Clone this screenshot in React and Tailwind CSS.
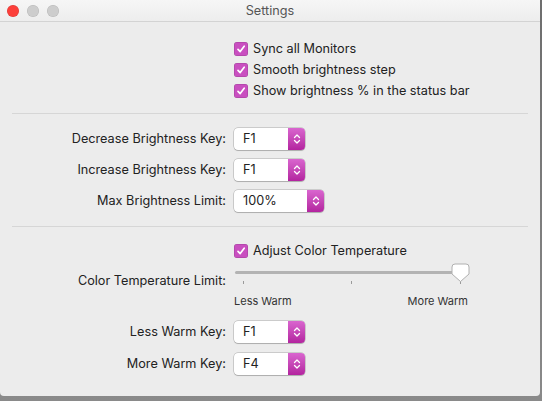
import React from 'react';

const font = { fontFamily: 'Inter, "Noto Sans", sans-serif' };

function Check({ label }) {
  return (
    <div className="flex h-[21px] items-center">
      <span className="flex h-[14px] w-[14px] items-center justify-center rounded-[3px] bg-[#c94fc0] shadow-[inset_0_0_0_0.5px_rgba(0,0,0,0.2)]">
        <svg width="10" height="10" viewBox="0 0 10 10" fill="none">
          <path d="M2 5.3 L4.2 7.6 L8.2 2.2" stroke="white" strokeWidth="1.7" strokeLinecap="round" strokeLinejoin="round" />
        </svg>
      </span>
      <span className="ml-[5px] text-[12.7px] text-[#222]">{label}</span>
    </div>
  );
}

function Popup({ value, width = 'w-[71px]' }) {
  return (
    <div className={`flex h-[22px] ${width} rounded-[4px] bg-white shadow-[0_0_0_0.5px_rgba(0,0,0,0.28),0_1px_1px_rgba(0,0,0,0.15)]`}>
      <span className="flex-1 pl-[9px] text-[12.7px] leading-[22px] text-[#222]">{value}</span>
      <span className="flex w-[17px] items-center justify-center rounded-r-[4px] bg-gradient-to-b from-[#d965cf] to-[#b3239f]">
        <svg width="8" height="12" viewBox="0 0 8 12" fill="none">
          <path d="M1.5 4.5 L4 2 L6.5 4.5 M1.5 7.5 L4 10 L6.5 7.5" stroke="white" strokeWidth="1.3" strokeLinecap="round" strokeLinejoin="round" />
        </svg>
      </span>
    </div>
  );
}

function Row({ label, children, className = '' }) {
  return (
    <div className={`flex items-center ${className}`}>
      <div className="w-[226px] text-right text-[12.7px] text-[#222]">{label}</div>
      <div className="ml-[8px]">{children}</div>
    </div>
  );
}

export default function App() {
  return (
    <div className="h-[401px] w-[542px] bg-gradient-to-b from-[#6e6e6e] to-[#8a8a8a]" style={font}>
      <div className="flex h-[396px] w-[540px] flex-col overflow-hidden rounded-b-[4px] bg-[#ececec]">
        {/* title bar */}
        <div className="relative flex h-[22px] items-center justify-center border-b border-[#d3d3d3] bg-gradient-to-b from-[#f6f6f6] to-[#ededed]">
          <div className="absolute left-[7px] top-[5px] flex gap-[8px]">
            <span className="h-[12px] w-[12px] rounded-full bg-[#fc3f3a] shadow-[inset_0_0_0_0.5px_rgba(0,0,0,0.15)]" />
            <span className="h-[12px] w-[12px] rounded-full bg-[#cdcdcd] shadow-[inset_0_0_0_0.5px_rgba(0,0,0,0.12)]" />
            <span className="h-[12px] w-[12px] rounded-full bg-[#cdcdcd] shadow-[inset_0_0_0_0.5px_rgba(0,0,0,0.12)]" />
          </div>
          <span className="text-[12.7px] text-[#555]">Settings</span>
        </div>

        {/* checkboxes */}
        <div className="ml-[234px] mt-[16px] flex flex-col">
          <Check label="Sync all Monitors" />
          <Check label="Smooth brightness step" />
          <Check label="Show brightness % in the status bar" />
        </div>

        <div className="mx-[12px] mt-[12px] h-px bg-[#d6d6d6]" />

        {/* keys */}
        <div className="mt-[14px] flex flex-col gap-[9px]">
          <Row label="Decrease Brightness Key:"><Popup value="F1" /></Row>
          <Row label="Increase Brightness Key:"><Popup value="F1" /></Row>
          <Row label="Max Brightness Limit:"><Popup value="100%" width="w-[90px]" /></Row>
        </div>

        <div className="mx-[12px] mt-[14px] h-px bg-[#d6d6d6]" />

        {/* color temperature */}
        <div className="ml-[234px] mt-[13px]">
          <Check label="Adjust Color Temperature" />
        </div>

        <div className="mt-[2px] flex">
          <div className="w-[226px] pt-[8px] text-right text-[12.7px] text-[#222]">Color Temperature Limit:</div>
          <div className="ml-[8px] w-[236px]">
            <div className="relative h-[24px]">
              <div className="absolute left-[1px] right-[10px] top-[8px] h-[3px] rounded-full bg-[#b3b3b3]" />
              <span className="absolute left-[9px] top-[18px] h-[3px] w-px bg-[#9a9a9a]" />
              <span className="absolute left-[117px] top-[18px] h-[3px] w-px bg-[#9a9a9a]" />
              <span className="absolute left-[226px] top-[18px] h-[3px] w-px bg-[#9a9a9a]" />
              <svg className="absolute left-[217px] top-0" width="19" height="20" viewBox="0 0 19 20" fill="none">
                <path d="M1 4 Q1 1 4 1 H15 Q18 1 18 4 V11 L9.5 18.5 L1 11 Z" fill="white" stroke="#b0b0b0" strokeWidth="1" />
              </svg>
            </div>
            <div className="mt-[6px] flex justify-between text-[11px] text-[#333]">
              <span>Less Warm</span>
              <span className="mr-[2px]">More Warm</span>
            </div>
          </div>
        </div>

        <div className="mt-[11px] flex flex-col gap-[10px]">
          <Row label="Less Warm Key:"><Popup value="F1" /></Row>
          <Row label="More Warm Key:"><Popup value="F4" /></Row>
        </div>
      </div>
    </div>
  );
}
